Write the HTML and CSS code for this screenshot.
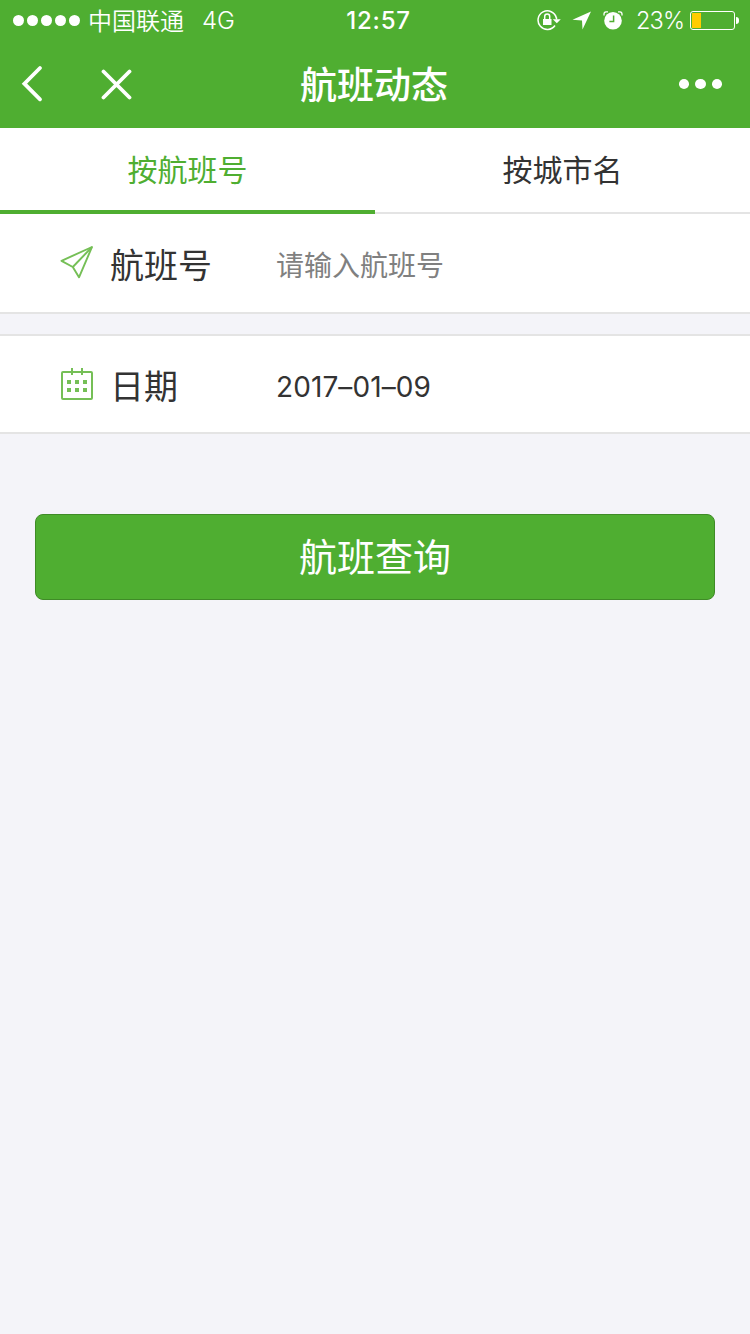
FILE: index.html
```html
<!DOCTYPE html>
<html lang="zh-CN">
<head>
    <meta charset="UTF-8">
    <meta name="viewport" content="width=device-width, initial-scale=1.0">
    <title>航班动态</title>
    <link rel="stylesheet" href="styles.css">
</head>
<body>
    <header>
        <div class="status-bar">
            <div class="status-left">
                <div class="signal"><i></i><i></i><i></i><i></i><i></i></div>
                <span class="carrier">中国联通</span>
                <span class="network">4G</span>
            </div>
            <div class="time">12:57</div>
            <div class="status-right">
                <svg class="icon-lock" width="24" height="22" viewBox="0 0 24 22" fill="none" stroke="#fff" stroke-width="1.5">
                    <path d="M19.4 9A9.3 9.3 0 1 0 18 16.5"/>
                    <path d="M15.8 10.2h8l-4 4z" fill="#fff" stroke="none"/>
                    <path d="M19.5 8.5v2"/>
                    <rect x="6" y="10" width="8.5" height="6" fill="#fff" stroke="none"/>
                    <path d="M7.7 10V7.6a2.5 2.5 0 0 1 5 0V10"/>
                </svg>
                <svg class="icon-location" width="20" height="20" viewBox="0 0 20 20" fill="#fff">
                    <path d="M19 1.5.5 9.8l9.5.7.5 9z"/>
                </svg>
                <svg class="icon-alarm" width="20" height="20" viewBox="0 0 20 20" fill="none">
                    <circle cx="10" cy="10.7" r="8.8" fill="#fff"/>
                    <path d="M10.6 5.5v6H6.4" stroke="#4fae31" stroke-width="1.5"/>
                    <path d="M1 5.5V4A2.2 2.2 0 0 1 3 1.8h2M19 5.5V4A2.2 2.2 0 0 0 17 1.8h-2" stroke="#fff" stroke-width="1.3"/>
                </svg>
                <span class="percent">23%</span>
                <div class="battery"><div class="battery-level" style="width:22%"></div></div>
                <div class="battery-cap"></div>
            </div>
        </div>
        <div class="nav-bar">
            <div class="nav-left">
                <svg width="24" height="40" viewBox="0 0 24 40" fill="none" stroke="#fff" stroke-width="3.8" stroke-linecap="round" stroke-linejoin="miter">
                    <path d="M20 4 4.4 19.7 20 35.3"/>
                </svg>
                <svg width="32" height="32" viewBox="0 0 32 32" fill="none" stroke="#fff" stroke-width="3.8" stroke-linecap="round">
                    <path d="M3.5 3.5l26 26M29.5 3.5l-26 26"/>
                </svg>
            </div>
            <h1>航班动态</h1>
            <div class="nav-more"><i></i><i></i><i></i></div>
        </div>
    </header>

    <div class="tabs">
        <div class="tab active">按航班号</div>
        <div class="tab">按城市名</div>
    </div>

    <div class="form-row">
        <svg class="row-icon" width="34" height="34" viewBox="0 0 34 34" fill="none" stroke="#75bf56" stroke-width="1.9" stroke-linejoin="round">
            <path d="M32 1 1.5 14.8l11.3 6.2L19 31.3z"/>
            <path d="M32 1 12.8 21"/>
        </svg>
        <label>航班号</label>
        <input type="text" placeholder="请输入航班号">
    </div>

    <div class="form-row row-date">
        <svg class="row-icon" width="34" height="34" viewBox="0 0 34 34" fill="none" stroke="#75bf56" stroke-width="2">
            <rect x="2" y="5" width="30" height="27" rx="1"/>
            <path d="M12 1v7M22 1v7"/>
            <path d="M7 15h4M15 15h4M23 15h4M7 23h4M15 23h4M23 23h4" stroke-width="4"/>
        </svg>
        <label>日期</label>
        <span class="date">2017–01–09</span>
    </div>

    <button class="btn-search">航班查询</button>
</body>
</html>
```

FILE: styles.css
```css
* { box-sizing: border-box; margin: 0; padding: 0; }
body { background: #f4f4f9; color: #333; font-family: Inter, 'Noto Sans CJK SC', sans-serif; font-weight: 400; }
header { background: #4fae31; color: #fff; height: 128px; }

/* status bar */
.status-bar { display: grid; grid-template-columns: 340px 77px 1fr; height: 40px; align-items: center; }
.status-left { display: flex; align-items: center; height: 40px; padding-left: 13px; }
.signal { display: flex; gap: 3px; margin-right: 8px; }
.signal i { width: 11px; height: 11px; border-radius: 50%; background: #fff; }
.carrier { font-size: 24px; line-height: 38px; padding-top: 3px; font-weight: 350; }
.network { font-size: 24px; margin-left: 18px; font-weight: 300; padding-top: 1px; }
.time { font-size: 24px; font-weight: 550; text-align: center; letter-spacing: 0.8px; padding-top: 1px; }
.status-right { display: flex; align-items: center; justify-content: flex-end; height: 40px; padding-right: 11px; }
.icon-location { margin-left: 11px; }
.icon-alarm { margin-left: 11px; }
.percent { font-size: 23.5px; font-weight: 350; margin: 0 6px 0 13px; letter-spacing: -0.9px; padding-top: 1px; }
.battery { width: 45px; height: 19px; border: 1px solid #fff; border-radius: 3px; padding: 1px; }
.battery-level { height: 15px; background: #fc0; }
.battery-cap { width: 3px; height: 7px; margin-left: 1px; background: #fff; border-radius: 0 3px 3px 0; }

/* nav bar */
.nav-bar { display: grid; grid-template-columns: 1fr 200px 1fr; height: 88px; align-items: center; }
.nav-left { display: flex; align-items: center; gap: 56px; padding-left: 20px; }
h1 { font-size: 37px; font-weight: 500; line-height: 60px; padding-top: 4px; margin-left: -2px; text-align: center; }
.nav-more { display: flex; justify-content: flex-end; gap: 6px; padding-right: 28px; }
.nav-more i { width: 10.5px; height: 10px; border-radius: 50%; background: #fff; }

/* tabs */
.tabs { display: flex; height: 86px; background: #fff; }
.tab { flex: 1; border-bottom: 2px solid #e4e4e4; font-size: 30px; line-height: 84px; text-align: center; }
.tab.active { color: #4fae31; border-bottom: 4px solid #4fae31; }

/* form */
.form-row { display: flex; align-items: center; height: 100px; padding-left: 60px; background: #fff; border-bottom: 2px solid #e4e4e4; }
.row-date { margin-top: 20px; border-top: 2px solid #e4e4e4; }
.row-icon { flex: none; }
.form-row label { width: 166px; margin-left: 16px; font-size: 34px; }
.row-date label { padding-top: 1px; }
input { width: 400px; padding-top: 6px; border: none; outline: none; background: none; font: inherit; font-size: 28px; }
input::placeholder { color: #808080; opacity: 1; }
.date { padding-top: 5px; font-size: 28px; letter-spacing: 0.1px; }

.btn-search { display: block; width: 680px; height: 86px; margin: 80px auto 0; padding-bottom: 5px; background: #4fae31; color: #fff; border: 1px solid #3f8b27; border-radius: 8px; font: inherit; font-size: 38px; }
```
